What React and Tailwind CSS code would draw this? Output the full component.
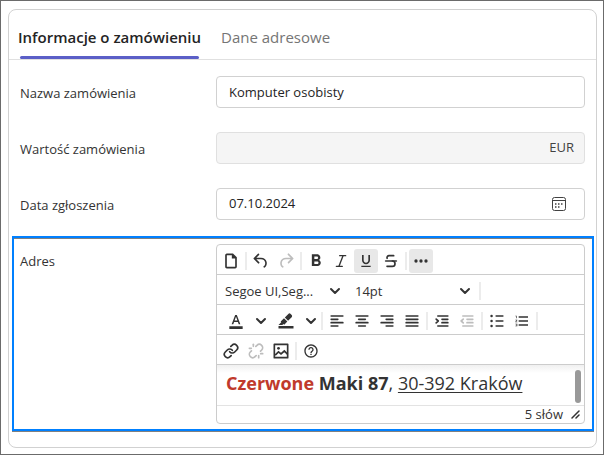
import { Italic, Strikethrough, Link, Unlink } from 'lucide-react';
import {
  MdFormatBold,
  MdFormatUnderlined,
  MdFormatColorText,
  MdFormatListNumbered,
  MdHelpOutline,
} from 'react-icons/md';

const INPUT =
  'h-8 w-full rounded border border-[#d1d1d1] bg-white px-3 text-[13px] text-[#242424] outline-none';

function Glyph({ children }) {
  return (
    <svg width="20" height="20" viewBox="0 0 24 24" fill="currentColor" aria-hidden="true">
      {children}
    </svg>
  );
}

function NewDocIcon() {
  return (
    <Glyph>
      <path d="M14.4 3H7a2 2 0 0 0-2 2v14c0 1.1.9 2 2 2h10a2 2 0 0 0 2-2V7.6L14.4 3ZM17 19H7V5h6v4h4v10Z" />
    </Glyph>
  );
}

function UndoIcon() {
  return (
    <Glyph>
      <path d="M6.4 8H12c3.7 0 6.2 2 6.8 5.1.6 2.7-.4 5.6-2.3 6.8a1 1 0 0 1-1-1.8c1.1-.6 1.8-2.7 1.4-4.6-.5-2.1-2.1-3.5-4.9-3.5H6.4l3.3 3.3a1 1 0 1 1-1.4 1.4l-5-5a1 1 0 0 1 0-1.4l5-5a1 1 0 0 1 1.4 1.4L6.4 8Z" />
    </Glyph>
  );
}

function RedoIcon() {
  return (
    <Glyph>
      <path d="M17.6 10H12c-2.8 0-4.4 1.4-4.9 3.5-.4 2 .3 4 1.4 4.6a1 1 0 1 1-1 1.8c-2-1.2-2.9-4.1-2.3-6.8.6-3 3-5.1 6.8-5.1h5.6l-3.3-3.3a1 1 0 1 1 1.4-1.4l5 5a1 1 0 0 1 0 1.4l-5 5a1 1 0 0 1-1.4-1.4l3.3-3.3Z" />
    </Glyph>
  );
}

function MoreIcon() {
  return (
    <Glyph>
      <circle cx="6" cy="12" r="2" />
      <circle cx="12" cy="12" r="2" />
      <circle cx="18" cy="12" r="2" />
    </Glyph>
  );
}

function HighlightIcon() {
  return (
    <Glyph>
      <path d="M3 18h18v3H3z" />
      <path d="M7.7 16.7H3l3.3-3.3-.7-.8L9.6 8.6l4 4.1-3.4 3.6c-.2.2-.6.2-.8 0l-.6-.7-1.1 1.1z" />
      <path d="m10.6 7.8 4.2-4.3a2 2 0 0 1 2.8 0L18.8 4.8c.7.7.7 2 0 2.7l-4.3 4.3z" />
    </Glyph>
  );
}

function Lines({ d }) {
  return (
    <Glyph>
      <path d={d} fill="none" stroke="currentColor" strokeWidth="2" strokeLinecap="round" />
    </Glyph>
  );
}

const ALIGN = [
  { label: 'Wyrównaj do lewej', d: 'M5 6h14M5 10h8M5 14h14M5 18h8' },
  { label: 'Wyśrodkuj', d: 'M5 6h14M8 10h8M5 14h14M8 18h8' },
  { label: 'Wyrównaj do prawej', d: 'M5 6h14M11 10h8M5 14h14M11 18h8' },
  { label: 'Wyjustuj', d: 'M5 6h14M5 10h14M5 14h14M5 18h14' },
];

function IndentIcon({ outdent }) {
  return (
    <Glyph>
      <path
        d="M7 6h12M12 10h7M12 14h7M7 18h12"
        fill="none"
        stroke="currentColor"
        strokeWidth="2"
        strokeLinecap="round"
      />
      <path
        d={outdent ? 'M7.5 9.8 5 12l2.5 2.2' : 'M5 9.8 7.5 12 5 14.2'}
        fill="none"
        stroke="currentColor"
        strokeWidth="2"
        strokeLinecap="round"
        strokeLinejoin="round"
      />
    </Glyph>
  );
}

function BulletsIcon() {
  return (
    <Glyph>
      <path d="M11 6h8M11 12h8M11 18h8" stroke="currentColor" strokeWidth="2" strokeLinecap="round" />
      <circle cx="5.5" cy="6" r="1.5" />
      <circle cx="5.5" cy="12" r="1.5" />
      <circle cx="5.5" cy="18" r="1.5" />
    </Glyph>
  );
}

function ImageIcon() {
  return (
    <Glyph>
      <path
        d="M4 4h16v16H4z"
        fill="none"
        stroke="currentColor"
        strokeWidth="2"
        strokeLinejoin="round"
      />
      <path
        d="m5 17 4-4 3 2.5 4-3.5 4 4"
        fill="none"
        stroke="currentColor"
        strokeWidth="2"
      />
      <circle cx="9" cy="8.8" r="1.7" />
    </Glyph>
  );
}

function Chevron() {
  return (
    <svg width="12" height="12" viewBox="0 0 12 12" fill="none" aria-hidden="true">
      <path d="m2 4 4 4 4-4" stroke="currentColor" strokeWidth="2" strokeLinecap="round" strokeLinejoin="round" />
    </svg>
  );
}

function CalendarIcon() {
  return (
    <svg width="16" height="16" viewBox="0 0 16 16" fill="none" aria-hidden="true">
      <rect x="1.5" y="1.5" width="13" height="13" rx="2" stroke="currentColor" />
      <path d="M1.5 4.5h13" stroke="currentColor" />
      <path
        d="M4 8h1.5M7 8h1.5M10 8h1.5M4 11h1.5M7 11h1.5"
        stroke="currentColor"
        strokeWidth="1.5"
      />
    </svg>
  );
}

function ToolButton({ label, active, disabled, wide, children }) {
  return (
    <button
      type="button"
      aria-label={label}
      disabled={disabled}
      className={`flex h-6 shrink-0 items-center justify-center rounded-[3px] ${wide || 'w-6'} ${
        active ? 'bg-[#e8e8e8]' : ''
      } ${disabled ? 'text-[#bdbdbd]' : 'text-[#333333]'}`}
    >
      {children}
    </button>
  );
}

function Group({ children }) {
  return <div className="flex gap-px">{children}</div>;
}

function Divider() {
  return <div className="mx-0.5 h-[18px] w-0.5 shrink-0 bg-[#ececec]" />;
}

function ToolRow({ children }) {
  return (
    <div className="flex h-[30px] items-center border-b border-[#cccccc] px-0.5 pt-0.5">
      {children}
    </div>
  );
}

function ToolSelect({ label, value }) {
  return (
    <div className="relative w-32 shrink-0 text-[#333333]">
      <select
        aria-label={label}
        defaultValue={value}
        className="h-6 w-full appearance-none bg-transparent pl-1.5 text-[13px] outline-none"
      >
        <option>{value}</option>
      </select>
      <span className="pointer-events-none absolute inset-y-0 right-1.5 flex items-center">
        <Chevron />
      </span>
    </div>
  );
}

function Editor() {
  return (
    <div className="overflow-hidden rounded border border-[#cccccc] bg-white">
      <ToolRow>
        <ToolButton label="Nowy dokument"><NewDocIcon /></ToolButton>
        <Divider />
        <Group>
          <ToolButton label="Cofnij"><UndoIcon /></ToolButton>
          <ToolButton label="Ponów" disabled><RedoIcon /></ToolButton>
        </Group>
        <Divider />
        <Group>
          <ToolButton label="Pogrubienie"><MdFormatBold size={20} /></ToolButton>
          <ToolButton label="Kursywa"><Italic size={16} strokeWidth={2} /></ToolButton>
          <ToolButton label="Podkreślenie" active><MdFormatUnderlined size={16} /></ToolButton>
          <ToolButton label="Przekreślenie"><Strikethrough size={16} strokeWidth={2.5} /></ToolButton>
        </Group>
        <Divider />
        <ToolButton label="Więcej" active><MoreIcon /></ToolButton>
      </ToolRow>

      <ToolRow>
        <div className="flex gap-0.5">
          <ToolSelect label="Czcionka" value="Segoe UI,Seg..." />
          <ToolSelect label="Rozmiar" value="14pt" />
        </div>
        <Divider />
      </ToolRow>

      <ToolRow>
        <ToolButton label="Kolor tekstu" wide="w-[34px]"><MdFormatColorText size={16} /></ToolButton>
        <ToolButton label="Wybierz kolor tekstu" wide="w-4"><Chevron /></ToolButton>
        <ToolButton label="Kolor tła" wide="w-[34px]"><HighlightIcon /></ToolButton>
        <ToolButton label="Wybierz kolor tła" wide="w-4"><Chevron /></ToolButton>
        <Divider />
        <Group>
          {ALIGN.map(({ label, d }) => (
            <ToolButton key={label} label={label}><Lines d={d} /></ToolButton>
          ))}
        </Group>
        <Divider />
        <Group>
          <ToolButton label="Zwiększ wcięcie"><IndentIcon /></ToolButton>
          <ToolButton label="Zmniejsz wcięcie" disabled><IndentIcon outdent /></ToolButton>
        </Group>
        <Divider />
        <Group>
          <ToolButton label="Lista punktowana"><BulletsIcon /></ToolButton>
          <ToolButton label="Lista numerowana"><MdFormatListNumbered size={16} /></ToolButton>
        </Group>
        <Divider />
      </ToolRow>

      <ToolRow>
        <Group>
          <ToolButton label="Wstaw łącze"><Link size={16} strokeWidth={2.5} /></ToolButton>
          <ToolButton label="Usuń łącze" disabled><Unlink size={16} strokeWidth={2.5} /></ToolButton>
          <ToolButton label="Wstaw obraz"><ImageIcon /></ToolButton>
        </Group>
        <Divider />
        <ToolButton label="Pomoc"><MdHelpOutline size={16} /></ToolButton>
      </ToolRow>

      <div className="flex h-10 items-start bg-linear-to-b from-[#f0f0f0] to-white to-20% pr-[3px]">
        <div
          role="textbox"
          aria-labelledby="adres-label"
          contentEditable
          suppressContentEditableWarning
          className="flex-1 px-[9px] pt-1.5 text-[18px] leading-6 text-[#333333] outline-none"
        >
          <b className="text-[#c0392b]">Czerwone</b> <b>Maki 87</b>,{' '}
          <span className="underline underline-offset-2">30-392 Kraków</span>
        </div>
        <div className="mt-[5px] h-[33px] w-1.5 rounded-full bg-[#999999]" />
      </div>

      <div className="flex h-[18px] items-center justify-end gap-2 border-t border-[#e3e3e3] pr-1 text-[13px] text-[#333333]">
        <span>5 słów</span>
        <svg width="9" height="9" viewBox="0 0 9 9" fill="none" aria-hidden="true">
          <path d="m1 8 7-7M5 8l3-3" stroke="currentColor" strokeWidth="1.5" strokeLinecap="round" />
        </svg>
      </div>
    </div>
  );
}

function Row({ id, label, highlighted, children }) {
  return (
    <div
      className={`flex items-start border-2 pt-1.5 pr-[7px] pb-[5px] pl-1.5 ${
        highlighted
          ? 'border-[#0080ff] shadow-[0_1px_0_#808080,inset_0_1px_0_#808080]'
          : 'border-transparent'
      }`}
    >
      <label
        id={`${id}-label`}
        htmlFor={id}
        className="w-[196px] shrink-0 pt-2 text-[13px] leading-[18px] text-[#333333]"
      >
        {label}
      </label>
      <div className="min-w-0 flex-1">{children}</div>
    </div>
  );
}

export default function App() {
  return (
    <div className="flex min-h-screen flex-col border border-[#6b6b6b] bg-white pt-2 pr-1.5 pb-1.5 pl-[7px] font-['Open_Sans',sans-serif]">
      <div className="flex-1 rounded-lg border border-[#d1d1d1]">
        <div role="tablist" className="flex h-[50px] items-end border-b border-[#e0e0e0] px-[9px]">
          <button
            type="button"
            role="tab"
            aria-selected="true"
            className="flex flex-col text-[15px] leading-6 font-semibold text-[#242424]"
          >
            Informacje o zamówieniu
            <span className="mx-0.5 mt-[7px] h-[3px] rounded-full bg-[#5b5fc7]" />
          </button>
          <button
            type="button"
            role="tab"
            aria-selected="false"
            className="mb-2.5 ml-5 text-[15px] leading-6 text-[#757575]"
          >
            Dane adresowe
          </button>
        </div>

        <div className="flex flex-col gap-[9px] pt-2 pr-0.5 pl-[3px]">
          <Row id="nazwa" label="Nazwa zamówienia">
            <input id="nazwa" type="text" defaultValue="Komputer osobisty" className={INPUT} />
          </Row>

          <Row id="wartosc" label="Wartość zamówienia">
            <div className="flex h-8 items-center rounded border border-[#e0e0e0] bg-[#f5f5f5] pr-2.5 text-[13px] text-[#424242]">
              <input id="wartosc" type="text" disabled className="min-w-0 flex-1 px-3 outline-none" />
              <span>EUR</span>
            </div>
          </Row>

          <Row id="data" label="Data zgłoszenia">
            <div className="flex h-8 items-center rounded border border-[#d1d1d1] pr-[17px] text-[13px] text-[#242424]">
              <input
                id="data"
                type="text"
                defaultValue="07.10.2024"
                className="min-w-0 flex-1 px-3 outline-none"
              />
              <button type="button" aria-label="Wybierz datę" className="text-[#424242]">
                <CalendarIcon />
              </button>
            </div>
          </Row>

          <Row id="adres" label="Adres" highlighted>
            <Editor />
          </Row>
        </div>
      </div>
    </div>
  );
}
